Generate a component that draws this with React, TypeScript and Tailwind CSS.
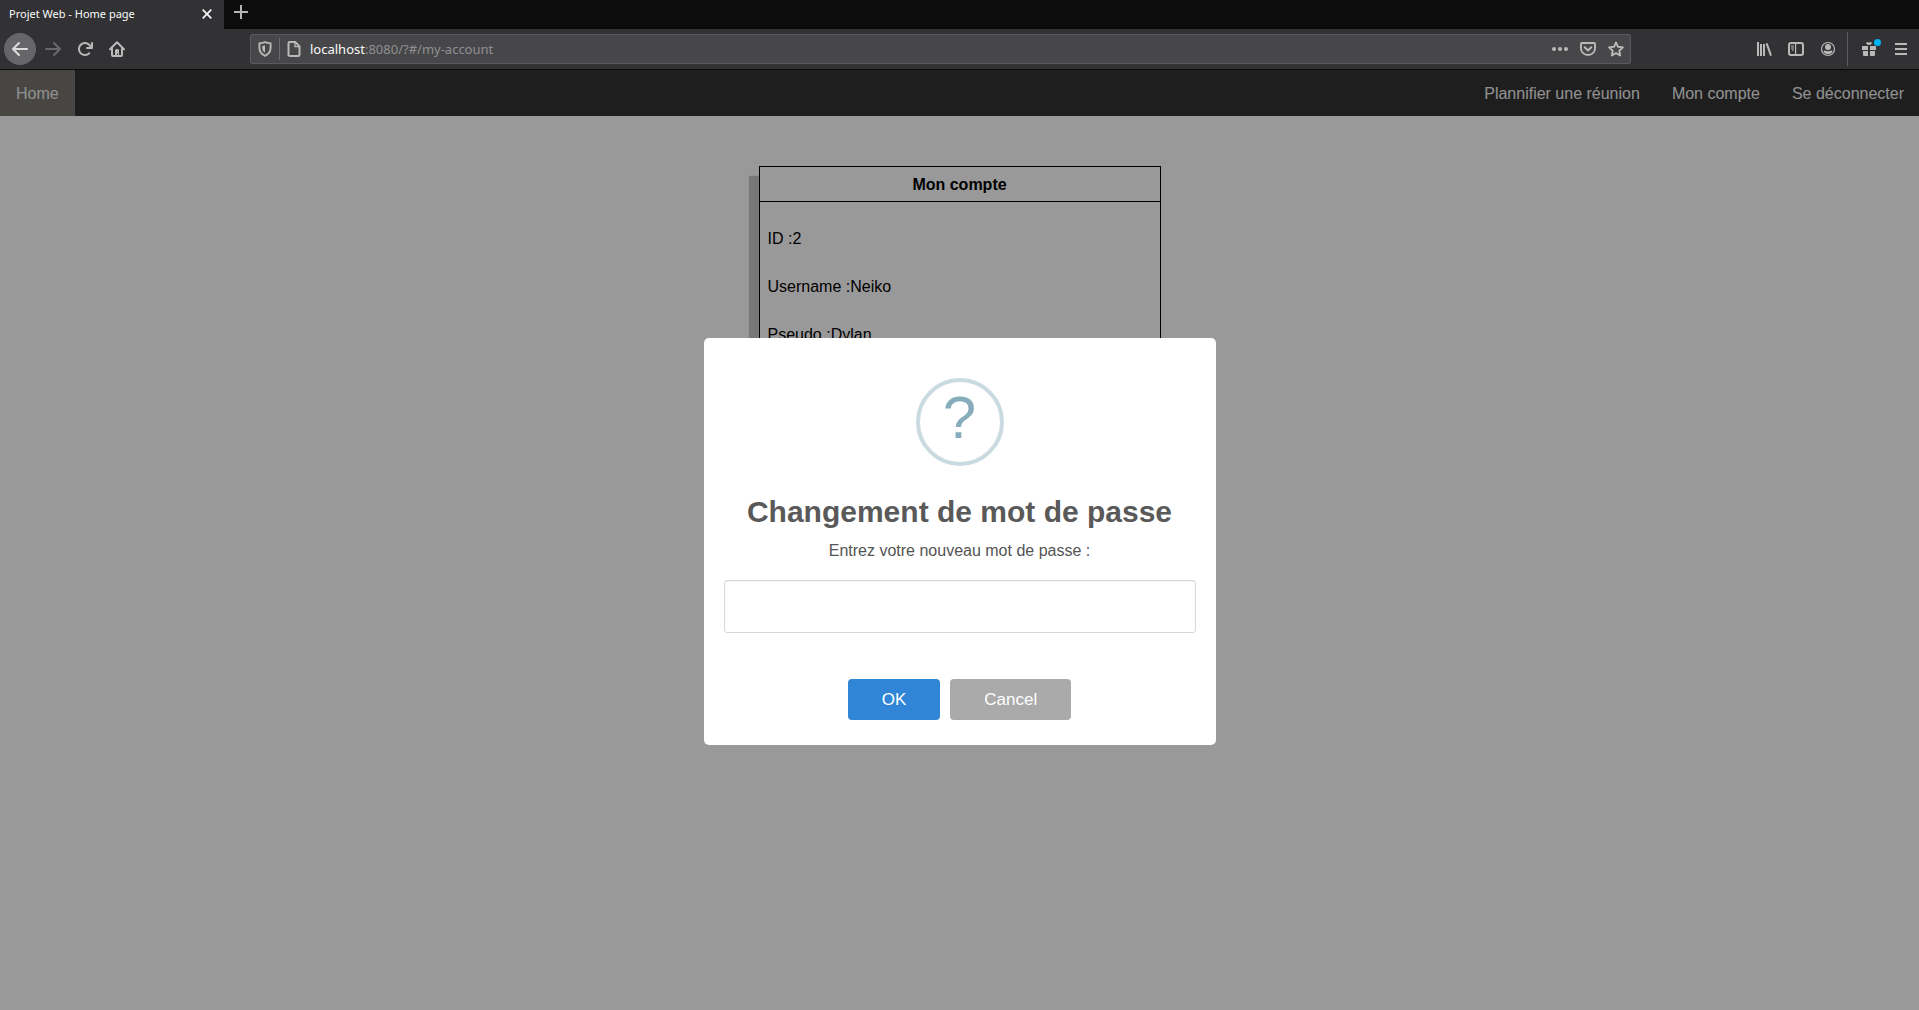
import type { ReactNode } from "react";

type IconProps = { children: ReactNode; className?: string };

function Icon({ children, className = "" }: IconProps) {
  return (
    <svg viewBox="0 0 16 16" className={`size-4 shrink-0 ${className}`} fill="currentColor" aria-hidden="true">
      {children}
    </svg>
  );
}

function ToolButton({ label, children, className = "" }: { label: string; children: ReactNode; className?: string }) {
  return (
    <button
      type="button"
      aria-label={label}
      className={`flex size-8 shrink-0 items-center justify-center ${className}`}
    >
      {children}
    </button>
  );
}

const ARROW =
  "M15 7H3.414l4.293-4.293a1 1 0 0 0-1.414-1.414l-6 6a1 1 0 0 0 0 1.414l6 6a1 1 0 0 0 1.414-1.414L3.414 9H15a1 1 0 0 0 0-2z";

function TabStrip() {
  return (
    <div className="flex h-[29px] bg-[#0c0c0d]">
      <div className="flex w-56 items-center justify-between bg-[#323234] pr-[7px] pl-[9px] text-[11px] text-[#f9f9fa]">
        <span>Projet Web - Home page</span>
        <button type="button" aria-label="Close tab" className="mb-0.5 flex size-5 items-center justify-center">
          <svg viewBox="0 0 10 10" className="size-[10px]" fill="none" stroke="currentColor" strokeWidth="1.7" aria-hidden="true">
            <path d="M.7.7l8.6 8.6M9.3.7L.7 9.3" />
          </svg>
        </button>
      </div>
      <button type="button" aria-label="New tab" className="mb-[5px] flex w-[34px] items-center justify-center text-[#b5b5b6]">
        <svg viewBox="0 0 14 14" className="size-[14px]" fill="none" stroke="currentColor" strokeWidth="2" aria-hidden="true">
          <path d="M7 0v14M0 7h14" />
        </svg>
      </button>
    </div>
  );
}

function AddressBar() {
  return (
    <div className="mx-[117px] flex h-[30px] min-w-0 flex-1 items-center rounded-[2px] border border-[#5a5a5c] bg-[#474749] pr-[6px] pl-[6px]">
      <Icon>
        <path d="M8 1.2c2 .9 4 1.1 5.6 1.2v4.2c0 4-2.2 6.8-5.6 8.2-3.400-1.400-5.600-4.200-5.600-8.200V2.400C4 2.300 6 2.100 8 1.200z" fill="none" stroke="currentColor" strokeWidth="1.900" />
        <path d="M8 4.200v7.600c-1.800-1-2.800-2.800-2.800-5.200V4.900C6.200 4.800 7.200 4.600 8 4.200z" />
      </Icon>
      <div className="mx-[6px] h-[22px] w-px bg-[#6b6b6d]" />
      <Icon>
        <path d="M3.800 1h5.400L13.500 5.300v8.400a1.300 1.300 0 0 1-1.300 1.300H3.800a1.300 1.300 0 0 1-1.300-1.300V2.300A1.300 1.300 0 0 1 3.800 1z" fill="none" stroke="currentColor" strokeWidth="2" />
        <path d="M9 1v4.600h4.500" fill="none" stroke="currentColor" strokeWidth="1.300" />
      </Icon>
      <div role="textbox" aria-label="Address" contentEditable suppressContentEditableWarning spellCheck={false} className="ml-2 flex-1 pt-0.5 text-[13px] text-[#8f8f91] outline-none">
        <span className="text-[#f9f9fa]">localhost</span>:8080/?#/my-account
      </div>
      <div className="flex items-center gap-3">
        <button type="button" aria-label="Page actions">
          <Icon>
            <circle cx="2" cy="8" r="2" />
            <circle cx="8" cy="8" r="2" />
            <circle cx="14" cy="8" r="2" />
          </Icon>
        </button>
        <button type="button" aria-label="Save to Pocket">
          <Icon>
            <path d="M1.900 2h12.200a.9.9 0 0 1 .9.900V7.500A7 6.500 0 0 1 1 7.500V2.900A.9.900 0 0 1 1.900 2z" fill="none" stroke="currentColor" strokeWidth="1.900" />
            <path d="M4.700 6.300L8 9.500l3.300-3.200" fill="none" stroke="currentColor" strokeWidth="2" strokeLinecap="round" strokeLinejoin="round" />
          </Icon>
        </button>
        <button type="button" aria-label="Bookmark this page">
          <Icon>
            <path d="M8 1.500l2 4.300 4.900.6-3.600 3.300.9 4.800L8 12.200l-4.200 2.300.9-4.800L1.100 6.400 6 5.800z" fill="none" stroke="currentColor" strokeWidth="1.900" strokeLinejoin="round" />
          </Icon>
        </button>
      </div>
    </div>
  );
}

function Toolbar() {
  return (
    <div className="flex h-[41px] items-center border-b border-[#0c0c0d] bg-[#323234] pr-[2px] pl-1 text-[#b9b9ba]">
      <ToolButton label="Back" className="mr-px rounded-full bg-[#666668] text-[#dcdcdd]">
        <Icon>
          <path d={ARROW} />
        </Icon>
      </ToolButton>
      <ToolButton label="Forward" className="text-[#69696b]">
        <Icon className="rotate-180">
          <path d={ARROW} />
        </Icon>
      </ToolButton>
      <ToolButton label="Reload">
        <Icon>
          <path d="M15 1a1 1 0 0 0-1 1v2.418A6.995 6.995 0 1 0 8 15a6.954 6.954 0 0 0 4.950-2.050 1 1 0 0 0-1.414-1.414A5.019 5.019 0 1 1 12.549 6H10a1 1 0 0 0 0 2h5a1 1 0 0 0 1-1V2a1 1 0 0 0-1-1z" />
        </Icon>
      </ToolButton>
      <ToolButton label="Home">
        <Icon>
          <path d="M1 8.300L8 1.300l7 7M3 7.500V14a1 1 0 0 0 1 1h8a1 1 0 0 0 1-1V7.500" fill="none" stroke="currentColor" strokeWidth="2" strokeLinecap="round" strokeLinejoin="round" />
          <path d="M6 15V9.500A1.500 1.500 0 0 1 7.500 8h1A1.500 1.500 0 0 1 10 9.500V15H9v-2.500H8V15z" />
        </Icon>
      </ToolButton>
      <AddressBar />
      <ToolButton label="Library">
        <Icon>
          <path d="M1 1h2v14H1zM4 3h2v12H4zM7 3h2v12H7z" />
          <path d="M10.600 2.300L15 14.700" fill="none" stroke="currentColor" strokeWidth="2" />
        </Icon>
      </ToolButton>
      <ToolButton label="Sidebars">
        <Icon>
          <rect x="1" y="2" width="14" height="12" rx="2" fill="none" stroke="currentColor" strokeWidth="2" />
          <path d="M7 2h1.200v12H7zM3 4.500h3v1H3zM3 6.500h3v1H3zM3.800 8.500H6v1H3.800z" />
        </Icon>
      </ToolButton>
      <ToolButton label="Account">
        <Icon>
          <circle cx="8" cy="8" r="6.500" fill="none" stroke="currentColor" strokeWidth="1.200" />
          <circle cx="8" cy="6" r="3" />
          <path d="M3.500 9.500c1.200 0 1.700.7 4.500.7s3.300-.7 4.500-.7A4.700 4 0 0 1 8 13.200a4.700 4 0 0 1-4.500-3.700z" />
        </Icon>
      </ToolButton>
      <div className="mr-[5px] ml-[3px] h-[34px] w-px bg-[#5c5c5e]" />
      <ToolButton label="What's new" className="relative">
        <Icon>
          <path d="M1.500 5H7v4H1V5.500zM9 5h5.500l.5.500V9H9zM2 10h5v5H3a1 1 0 0 1-1-1zM9 10h5v4a1 1 0 0 1-1 1H9z" />
          <path d="M8 4C6 3.800 5 3 5.300 1.700 5.700.7 7.200.5 8 1.800 8.800.5 10.300.7 10.700 1.700 11 3 10 3.800 8 4z" />
        </Icon>
        <span className="absolute top-1.5 right-1 size-[7px] rounded-full bg-[#00b3f4]" />
      </ToolButton>
      <ToolButton label="Menu">
        <svg viewBox="0 0 12 12" className="size-3" fill="currentColor" aria-hidden="true">
          <path d="M0 0h12v2H0zM0 5h12v2H0zM0 10h12v2H0z" />
        </svg>
      </ToolButton>
    </div>
  );
}

function SiteNav() {
  return (
    <nav className="flex h-[46px] items-stretch justify-between bg-[#333] text-base text-[#f2f2f2]">
      <a href="#/" className="flex items-center bg-[#777571] px-4 pt-0.5">
        Home
      </a>
      <div className="flex items-stretch pt-0.5">
        <a href="#/meeting" className="flex items-center px-4">
          Plannifier une réunion
        </a>
        <a href="#/my-account" className="flex items-center px-4">
          Mon compte
        </a>
        <a href="#/logout" className="flex items-center pr-[15px] pl-4">
          Se déconnecter
        </a>
      </div>
    </nav>
  );
}

function AccountCard() {
  return (
    <section className="mx-auto mt-[50px] w-[402px] border border-black bg-white text-base text-black shadow-[-10px_10px_1px_#c6c6c6]">
      <h1 className="border-b border-black pt-1.5 pb-1 text-center font-bold">Mon compte</h1>
      <div className="space-y-6 px-2 pt-[25px] pb-6">
        <p>ID :2</p>
        <p>Username :Neiko</p>
        <p>Pseudo :Dylan</p>
      </div>
    </section>
  );
}

function PasswordDialog() {
  return (
    <div className="absolute inset-0 flex items-center justify-center bg-black/40 pt-[3px]">
      <form
        role="dialog"
        aria-labelledby="dialog-title"
        className="flex w-lg flex-col items-center rounded-[5px] bg-white p-5 pb-[25px] text-[#545454]"
        onSubmit={(event) => event.preventDefault()}
      >
        <div className="mt-5 flex size-[88px] justify-center rounded-full border-4 border-[#c9dae1] text-[60px] leading-[72px] text-[#87adbd]">
          ?
        </div>
        <h2 id="dialog-title" className="mt-7 text-[30px] leading-9 font-bold text-[#595959]">
          Changement de mot de passe
        </h2>
        <label htmlFor="new-password" className="mt-[9px] text-base">
          Entrez votre nouveau mot de passe :
        </label>
        <input
          id="new-password"
          type="password"
          className="mt-[17px] h-[53px] w-full rounded-[3px] border border-[#d9d9d9] px-3 text-lg shadow-[inset_0_1px_1px_rgba(0,0,0,0.06)] outline-none"
        />
        <div className="mt-[46px] flex gap-[10px] text-[17px] text-white">
          <button type="submit" className="h-[41px] rounded-sm bg-[#3085d6] px-[34px]">
            OK
          </button>
          <button type="button" className="h-[41px] rounded-sm bg-[#aaa] px-[34px]">
            Cancel
          </button>
        </div>
      </form>
    </div>
  );
}

export default function App() {
  return (
    <div className="flex min-h-screen flex-col bg-white">
      <header className="font-['Noto_Sans',sans-serif]">
        <TabStrip />
        <Toolbar />
      </header>
      <main className="relative flex-1 font-['Liberation_Sans',Arial,sans-serif]">
        <SiteNav />
        <AccountCard />
        <PasswordDialog />
      </main>
    </div>
  );
}
